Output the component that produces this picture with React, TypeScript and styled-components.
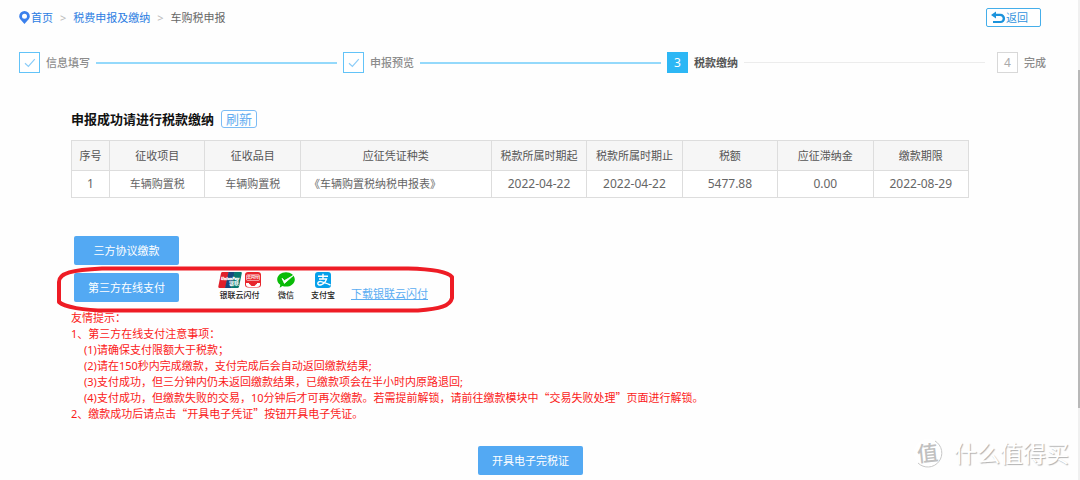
import React from "react";
import styled, { createGlobalStyle } from "styled-components";

const GlobalStyle = createGlobalStyle`
  * { box-sizing: border-box; }
  body {
    margin: 0;
    background: #fefefe;
    color: #666;
    font-family: "Noto Sans", "Noto Sans CJK SC", sans-serif;
    font-size: 11px;
    line-height: 16px;
  }
  button { font-family: inherit; cursor: pointer; }
`;

const Page = styled.div`
  position: relative;
  display: flex;
  flex-direction: column;
  min-height: 100vh;
  overflow: hidden;
`;

const TopBar = styled.header`
  display: flex;
  align-items: center;
  justify-content: space-between;
  padding: 8px 39px 0 19px;
`;

const Breadcrumb = styled.nav`
  display: flex;
  align-items: center;
  gap: 7px;
`;

const CrumbLink = styled.a`
  display: flex;
  align-items: center;
  gap: 1px;
  color: #2b7de2;
  text-decoration: none;
`;

const Separator = styled.span`
  color: #bbb;
`;

const BackButton = styled.button`
  display: flex;
  align-items: center;
  width: 55px;
  height: 19px;
  padding: 0 4px;
  border: 1px solid #45aeea;
  border-radius: 2px;
  background: #fff;
  color: #2f93dd;
  font-size: 11px;
  line-height: 16px;
`;

const Steps = styled.ol`
  display: flex;
  align-items: center;
  gap: 6px;
  margin: 25px 0 0;
  padding: 0 34px 0 19px;
  list-style: none;
`;

type StepState = "done" | "current" | "todo";

const StepItem = styled.li<{ $state: StepState }>`
  display: flex;
  align-items: center;
  gap: 6px;
  flex: ${(p) => (p.$state === "todo" ? "none" : "1")};
  margin-left: ${(p) => (p.$state === "todo" ? "6px" : "0")};
`;

const stepBorders: Record<StepState, string> = {
  done: "#62c3f8",
  current: "#2db7f5",
  todo: "#d8d8d8",
};

const StepBox = styled.span<{ $state: StepState }>`
  display: flex;
  align-items: center;
  justify-content: center;
  flex: none;
  width: 21px;
  height: 21px;
  border: 1px solid ${(p) => stepBorders[p.$state]};
  background: ${(p) => (p.$state === "current" ? "#2db7f5" : "#fff")};
  color: ${(p) => (p.$state === "current" ? "#fff" : "#aaa")};
  font-size: 12px;
`;

const StepLabel = styled.span<{ $state: StepState }>`
  flex: none;
  color: ${(p) => (p.$state === "current" ? "#555" : "#8c8c8c")};
  font-weight: ${(p) => (p.$state === "current" ? 600 : 500)};
`;

const StepLine = styled.span<{ $done: boolean }>`
  flex: 1;
  height: ${(p) => (p.$done ? "2px" : "1px")};
  background: ${(p) => (p.$done ? "#94d9fb" : "#ececec")};
`;

const Content = styled.main`
  padding: 37px 111px 0 71px;
`;

const TitleRow = styled.div`
  display: flex;
  align-items: center;
  gap: 7px;
  margin-bottom: 12px;
`;

const Title = styled.h1`
  margin: 0;
  color: #111;
  font-size: 13px;
  line-height: 18px;
  font-weight: 700;
`;

const RefreshButton = styled.button`
  height: 18px;
  padding: 0 4px;
  border: 1px solid #7cbcf5;
  border-radius: 3px;
  background: #fff;
  color: #62acf0;
  font-size: 13px;
  line-height: 16px;
`;

const TaxTable = styled.table`
  width: 100%;
  table-layout: fixed;
  border-collapse: collapse;
  text-align: center;
`;

const HeadCell = styled.th<{ $share: number }>`
  width: ${(p) => p.$share}%;
  height: 30px;
  padding: 0;
  border: 1px solid #ddd;
  background: #f6f6f6;
  color: #555;
  font-weight: 400;
`;

const Cell = styled.td<{ $numeric?: boolean; $start?: boolean }>`
  height: 27px;
  padding: 0 8px;
  border: 1px solid #ddd;
  background: #fff;
  font-size: ${(p) => (p.$numeric ? "12px" : "11px")};
  text-align: ${(p) => (p.$start ? "left" : "center")};
`;

const PayArea = styled.section`
  display: flex;
  flex-direction: column;
  align-items: flex-start;
  gap: 8px;
  padding: 38px 0 0 3px;
`;

const PrimaryButton = styled.button`
  min-width: 105px;
  height: 29px;
  padding: 0 12px;
  border: 0;
  border-radius: 2px;
  background: #53a9f3;
  color: #fff;
  font-size: 11px;
  line-height: 16px;
`;

const OnlineRow = styled.div`
  position: relative;
  display: flex;
  align-items: center;
`;

const Methods = styled.ul`
  display: flex;
  gap: 16px;
  margin: -4px 0 0 39px;
  padding: 0;
  list-style: none;
`;

const Method = styled.li`
  display: flex;
  flex-direction: column;
  align-items: center;
  color: #222;
  font-size: 8px;
  line-height: 10px;
  font-weight: 500;
`;

const MethodIcons = styled.span`
  display: flex;
  gap: 3px;
  height: 18px;
`;

const DownloadLink = styled.a`
  align-self: flex-end;
  margin-left: 16px;
  color: #5badf2;
  text-decoration: underline;
`;

const Marker = styled.svg`
  position: absolute;
  left: -18px;
  top: -9px;
  pointer-events: none;
`;

const Tips = styled.ul`
  margin: 8px 0 0;
  padding: 0;
  list-style: none;
  color: #fb1a1a;
`;

const Tip = styled.li<{ $nested?: boolean }>`
  padding-left: ${(p) => (p.$nested ? "13px" : "0")};
`;

const Quote = styled.span`
  font-family: "Noto Sans CJK SC", sans-serif;
  line-height: 1;
`;

const Footer = styled.footer`
  display: flex;
  justify-content: center;
  padding: 24px 19px 0 0;
`;

const Watermark = styled.div`
  position: absolute;
  right: 11px;
  bottom: 10px;
  display: flex;
  align-items: center;
  gap: 9px;
  color: #fff;
  font-size: 23px;
  line-height: 34px;
  text-shadow: 1px 1px 1px #b0b0b0;
`;

const ScrollTrack = styled.div`
  position: absolute;
  top: 0;
  right: 0;
  bottom: 0;
  width: 2px;
  background: #f0f0f0;
`;

const ScrollThumb = styled.div`
  height: 338px;
  margin-top: 70px;
  background: #b8b8b8;
`;

const SealText = styled.text`
  fill: #c0c0c0;
  font-size: 21px;
  font-weight: 500;
  text-shadow: none;
`;

const PinIcon = () => (
  <svg width="11" height="13" viewBox="0 0 11 13" aria-hidden="true">
    <path
      fill="#3b80ec"
      fillRule="evenodd"
      d="M5.5 0A5.3 5.3 0 0 0 .2 5.2C.2 8 3.3 10 5.5 13 7.700 10 10.800 8 10.800 5.200A5.300 5.300 0 0 0 5.500 0Zm0 2.700a2.500 2.500 0 1 1 0 5 2.500 2.500 0 0 1 0-5Z"
    />
  </svg>
);

const BackIcon = () => (
  <svg width="15" height="13" viewBox="0 0 15 13" aria-hidden="true">
    <path d="M0 4 5 .5v2.300h4.500a4.600 4.600 0 0 1 0 9.200H2V9.900h7.200a2.500 2.500 0 0 0 0-5H5v2.600Z" fill="#1c93dc" />
  </svg>
);

const CheckIcon = () => (
  <svg width="12" height="10" viewBox="0 0 12 10" fill="none" aria-hidden="true">
    <path d="M1 5.200 4.400 8.500 10.800 1.200" stroke="#8ccdf8" strokeWidth="1.200" />
  </svg>
);

const UnionPayIcon = () => (
  <svg width="24" height="16" viewBox="0 0 24 16" aria-hidden="true">
    <path d="M4.500 0H11L7.500 16H1.300Q0 16 .3 14.600L3 1.300Q3.300 0 4.500 0Z" fill="#e0202b" />
    <path d="M10.500 0H17L13.500 16H7Z" fill="#16497c" />
    <path d="M16.500 0h6.300q1.300 0 1 1.300L21 14.700Q20.700 16 19.500 16H13Z" fill="#08796f" />
    <text x="3" y="8" fontSize="4" fontWeight="700" fontStyle="italic" fill="#fff" stroke="#fff" strokeWidth=".3">UnionPay</text>
    <text x="11" y="13" fontSize="5" fontWeight="700" fill="#fff">银联</text>
  </svg>
);

const QuickPassIcon = () => (
  <svg width="16" height="16" viewBox="0 0 16 16" aria-hidden="true">
    <rect x="0" y="0" width="16" height="15.500" rx="3" fill="#e7262d" />
    <path d="M1 11h14v1.500q0 2.500-3 2.500H4q-3 0-3-2.500Z" fill="#fff" />
    <path d="M4 10h8v1.500L9.500 14h-3L4 11.500Z" fill="#e7262d" />
    <rect x="1.500" y="2.800" width="13" height="5.600" rx="1" fill="none" stroke="#fff" strokeWidth=".6" />
    <text x="2" y="7.100" fontSize="4" fontWeight="700" fill="#fff">云闪付</text>
  </svg>
);

const WechatPayIcon = () => (
  <svg width="18" height="16" viewBox="0 0 18 16" aria-hidden="true">
    <path d="M9 .2c4.900 0 8.800 3.200 8.800 7.200s-3.900 7.200-8.800 7.200c-1.300 0-2.500-.2-3.600-.6L2.700 15.700l.6-2.900C1.400 11.500.2 9.600.2 7.400.2 3.400 4.100.2 9 .2Z" fill="#09bb07" />
    <path d="M5 6.300 7.500 8.600 16.600 3.200 7.400 11.400Z" fill="#fff" stroke="#fff" strokeWidth=".8" strokeLinejoin="round" />
  </svg>
);

const AlipayIcon = () => (
  <svg width="16" height="16" viewBox="0 0 16 16" aria-hidden="true">
    <rect width="16" height="16" rx="3" fill="#06a0ea" />
    <g fill="none" stroke="#fff" strokeWidth="1.400">
      <path d="M3 4.200h10M8 1.800v5M4 7h7.500Q10 11.500 6.200 12.800 3 13.500 2.800 11.400 3 9.200 6 9.600 9 10.200 15.500 13" />
    </g>
  </svg>
);

const columns = [
  { name: "序号", share: 4.24 },
  { name: "征收项目", share: 10.64 },
  { name: "征收品目", share: 10.64 },
  { name: "应征凭证种类", share: 21.28 },
  { name: "税款所属时期起", share: 10.64 },
  { name: "税款所属时期止", share: 10.64 },
  { name: "税额", share: 10.64 },
  { name: "应征滞纳金", share: 10.64 },
  { name: "缴款期限", share: 10.64 },
];

const steps: { label: string; state: StepState }[] = [
  { label: "信息填写", state: "done" },
  { label: "申报预览", state: "done" },
  { label: "税款缴纳", state: "current" },
  { label: "完成", state: "todo" },
];

export default function App() {
  return (
    <Page lang="zh-CN">
      <GlobalStyle />
      <TopBar>
        <Breadcrumb>
          <CrumbLink href="#home">
            <PinIcon />
            首页
          </CrumbLink>
          <Separator>&gt;</Separator>
          <CrumbLink href="#tax">税费申报及缴纳</CrumbLink>
          <Separator>&gt;</Separator>
          <span>车购税申报</span>
        </Breadcrumb>
        <BackButton type="button">
          <BackIcon />
          返回
        </BackButton>
      </TopBar>

      <Steps>
        {steps.map(({ label, state }, i) => (
          <StepItem key={label} $state={state}>
            <StepBox $state={state}>{state === "done" ? <CheckIcon /> : i + 1}</StepBox>
            <StepLabel $state={state}>{label}</StepLabel>
            {state !== "todo" && <StepLine $done={state === "done"} />}
          </StepItem>
        ))}
      </Steps>

      <Content>
        <TitleRow>
          <Title>申报成功请进行税款缴纳</Title>
          <RefreshButton type="button">刷新</RefreshButton>
        </TitleRow>

        <TaxTable>
          <thead>
            <tr>
              {columns.map((c) => (
                <HeadCell key={c.name} $share={c.share} scope="col">
                  {c.name}
                </HeadCell>
              ))}
            </tr>
          </thead>
          <tbody>
            <tr>
              <Cell $numeric>1</Cell>
              <Cell>车辆购置税</Cell>
              <Cell>车辆购置税</Cell>
              <Cell $start>《车辆购置税纳税申报表》</Cell>
              <Cell $numeric>2022-04-22</Cell>
              <Cell $numeric>2022-04-22</Cell>
              <Cell $numeric>5477.88</Cell>
              <Cell $numeric>0.00</Cell>
              <Cell $numeric>2022-08-29</Cell>
            </tr>
          </tbody>
        </TaxTable>

        <PayArea>
          <PrimaryButton type="button">三方协议缴款</PrimaryButton>
          <OnlineRow>
            <PrimaryButton type="button">第三方在线支付</PrimaryButton>
            <Methods>
              <Method>
                <MethodIcons>
                  <UnionPayIcon />
                  <QuickPassIcon />
                </MethodIcons>
                银联云闪付
              </Method>
              <Method>
                <MethodIcons>
                  <WechatPayIcon />
                </MethodIcons>
                微信
              </Method>
              <Method>
                <MethodIcons>
                  <AlipayIcon />
                </MethodIcons>
                支付宝
              </Method>
            </Methods>
            <DownloadLink href="#download">下载银联云闪付</DownloadLink>
            <Marker width="404" height="50" viewBox="0 0 404 50" fill="none" aria-hidden="true">
              <path
                d="M46 4.500H352C376 5 392 8 396 13V34C394 42 384 45 362 46.500H50C28 46.500 8 43 3 38V18C3 9 16 6 46 4.500Z"
                stroke="#ee1c25"
                strokeWidth="4"
                strokeLinejoin="round"
              />
            </Marker>
          </OnlineRow>
        </PayArea>

        <Tips>
          <Tip>友情提示：</Tip>
          <Tip>1、第三方在线支付注意事项：</Tip>
          <Tip $nested>(1)请确保支付限额大于税款；</Tip>
          <Tip $nested>(2)请在150秒内完成缴款，支付完成后会自动返回缴款结果;</Tip>
          <Tip $nested>(3)支付成功，但三分钟内仍未返回缴款结果，已缴款项会在半小时内原路退回;</Tip>
          <Tip $nested>
            (4)支付成功，但缴款失败的交易，10分钟后才可再次缴款。若需提前解锁，请前往缴款模块中<Quote>“</Quote>交易失败处理<Quote>”</Quote>页面进行解锁。
          </Tip>
          <Tip>
            2、缴款成功后请点击<Quote>“</Quote>开具电子凭证<Quote>”</Quote>按钮开具电子凭证。
          </Tip>
        </Tips>
      </Content>

      <Footer>
        <PrimaryButton type="button">开具电子完税证</PrimaryButton>
      </Footer>

      <Watermark>
        <svg width="34" height="34" viewBox="0 0 34 34" aria-hidden="true">
          <circle cx="17" cy="17" r="14" fill="#fff" />
          <path d="M24 5A14 14 0 1 1 7 27" fill="none" stroke="#c8c8c8" />
          <SealText x="6" y="25" transform="rotate(-6 17 17)">
            值
          </SealText>
        </svg>
        什么值得买
      </Watermark>
      <ScrollTrack>
        <ScrollThumb />
      </ScrollTrack>
    </Page>
  );
}
